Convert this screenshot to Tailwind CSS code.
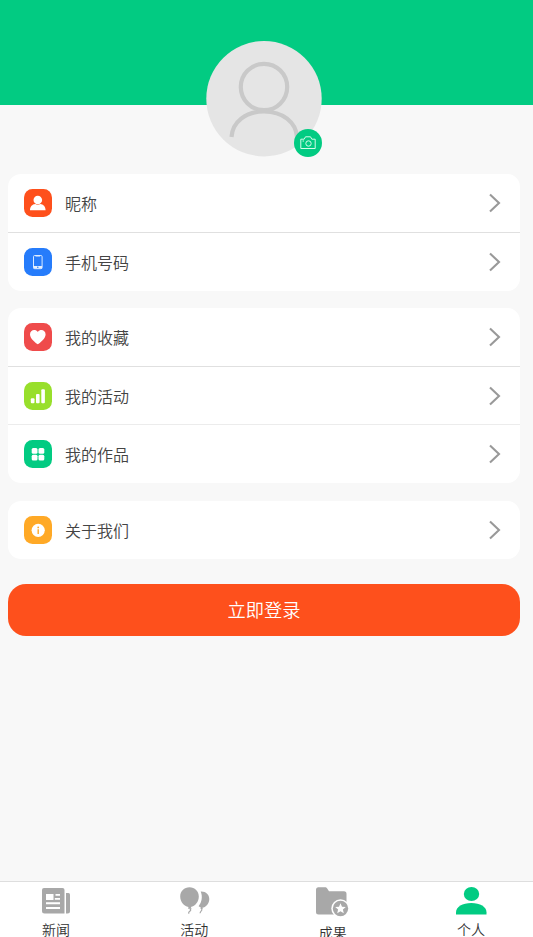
<!DOCTYPE html>
<html lang="zh-CN">

<head>
    <meta charset="UTF-8">
    <meta name="viewport" content="width=device-width, initial-scale=1.0">
    <title>个人</title>
    <script src="https://cdn.jsdelivr.net/npm/@tailwindcss/browser@4"></script>
</head>

<body class="bg-[#f8f8f8] h-screen flex flex-col overflow-hidden font-['Noto_Sans_CJK_SC',sans-serif] font-[350] text-[#444]">

    <!-- Header -->
    <header class="bg-[#02cb82] h-[105px] shrink-0 pt-[41px] pr-[5px] flex justify-center">
        <div class="relative w-[116px] h-[116px] shrink-0">
            <svg class="w-[116px] h-[116px]" viewBox="0 0 116 116" fill="none">
                <circle cx="58" cy="57.7" r="57.7" fill="#e5e5e5" />
                <circle cx="58" cy="46" r="23.2" stroke="#c9c9c9" stroke-width="4.2" />
                <path d="M25.5 96C26.500 81 39.5 70.500 58 70.500S90 81 91 96" stroke="#c9c9c9" stroke-width="4.2" />
            </svg>
            <button class="absolute left-[88px] top-[88px] w-7 h-7 rounded-full bg-[#02cb82] flex items-center justify-center">
                <svg class="w-4 h-4" viewBox="0 0 16 16" fill="none" stroke="#d5fbea" stroke-width="1">
                    <path d="M.8 4.200h3.400l1.300-2.400h5l1.300 2.400h3.400v9.300H.8z" stroke-linejoin="round" />
                    <circle cx="8.500" cy="8.500" r="2.700" />
                    <path d="M2.500 6h1.500" />
                </svg>
            </button>
        </div>
    </header>

    <main class="flex-1 min-h-0 pt-[69px] pl-2 pr-[13px]">
        <!-- Account -->
        <div class="bg-white rounded-[13px] h-[117px] divide-y divide-[#e0e0e0] flex flex-col">
            <a class="flex-1 flex items-center px-4">
                <svg class="w-7 h-7" viewBox="0 0 28 28">
                    <rect width="28" height="28" rx="8.500" fill="#fe501c" />
                    <circle cx="13.800" cy="11" r="4.300" fill="#fff" />
                    <path d="M6 21.300c0-3.700 2.300-5.800 5.200-6.200 1.600.9 3.500.9 5.100 0 3 .4 5.300 2.500 5.300 6.200z" fill="#fff" />
                </svg>
                <span class="ml-[13px] text-[16px] leading-6 flex-1">昵称</span>
                <svg class="w-3 h-5 mr-[3px]" viewBox="0 0 12 20" fill="none" stroke="#999" stroke-width="2.100"><path d="M1 1.500l9 8.500-9 8.500" /></svg>
            </a>
            <a class="flex-1 flex items-center px-4">
                <svg class="w-7 h-7" viewBox="0 0 28 28">
                    <rect width="28" height="28" rx="8.500" fill="#267cfb" />
                    <rect x="9.500" y="7.500" width="8.600" height="13.200" rx="1.200" fill="none" stroke="#d7e8ff" stroke-width="1" />
                    <path d="M9.500 18h8.600v2.500H9.500zM11.500 7.300h4.600v1.300h-4.600z" fill="#e5f0ff" />
                    <circle cx="13.800" cy="19.300" r=".8" fill="#267cfb" />
                </svg>
                <span class="ml-[13px] text-[16px] leading-6 flex-1">手机号码</span>
                <svg class="w-3 h-5 mr-[3px]" viewBox="0 0 12 20" fill="none" stroke="#999" stroke-width="2.100"><path d="M1 1.500l9 8.500-9 8.500" /></svg>
            </a>
        </div>

        <!-- My content -->
        <div class="mt-[17px] bg-white rounded-[13px] h-[175px] divide-y divide-[#e0e0e0] flex flex-col">
            <a class="flex-1 flex items-center px-4">
                <svg class="w-7 h-7" viewBox="0 0 28 28">
                    <rect width="28" height="28" rx="8.500" fill="#ef4b4b" />
                    <path d="M13.800 21.200C12 20.500 6 15.700 6 11.600c0-4.800 5.400-6 7.800-2.600 2.400-3.400 7.800-2.200 7.800 2.600 0 4.100-6 8.900-7.800 9.600z" fill="#fff" />
                </svg>
                <span class="ml-[13px] text-[16px] leading-6 flex-1">我的收藏</span>
                <svg class="w-3 h-5 mr-[3px]" viewBox="0 0 12 20" fill="none" stroke="#999" stroke-width="2.100"><path d="M1 1.500l9 8.500-9 8.500" /></svg>
            </a>
            <a class="flex-1 flex items-center px-4 border-[#ececec]">
                <svg class="w-7 h-7" viewBox="0 0 28 28">
                    <rect width="28" height="28" rx="8.500" fill="#98df2b" />
                    <g fill="#fff">
                        <rect x="6.800" y="16.300" width="3.700" height="5" rx="1" />
                        <rect x="12" y="12" width="3.600" height="9.300" rx="1" />
                        <rect x="17.300" y="7.200" width="3.600" height="14.100" rx="1" />
                    </g>
                </svg>
                <span class="ml-[13px] text-[16px] leading-6 flex-1">我的活动</span>
                <svg class="w-3 h-5 mr-[3px]" viewBox="0 0 12 20" fill="none" stroke="#999" stroke-width="2.100"><path d="M1 1.500l9 8.500-9 8.500" /></svg>
            </a>
            <a class="flex-1 flex items-center px-4">
                <svg class="w-7 h-7" viewBox="0 0 28 28">
                    <rect width="28" height="28" rx="8.500" fill="#02cb82" />
                    <g fill="#fff">
                        <rect x="7.700" y="8" width="5.800" height="5.800" rx="1.500" />
                        <rect x="14.500" y="8" width="5.800" height="5.800" rx="1.500" />
                        <rect x="7.700" y="14.800" width="5.800" height="5.800" rx="1.500" />
                        <rect x="14.500" y="14.800" width="5.800" height="5.800" rx="1.500" />
                    </g>
                </svg>
                <span class="ml-[13px] text-[16px] leading-6 flex-1">我的作品</span>
                <svg class="w-3 h-5 mr-[3px]" viewBox="0 0 12 20" fill="none" stroke="#999" stroke-width="2.100"><path d="M1 1.500l9 8.500-9 8.500" /></svg>
            </a>
        </div>

        <!-- About -->
        <div class="mt-[18px] bg-white rounded-[13px] h-[58px] flex flex-col">
            <a class="flex-1 flex items-center px-4">
                <svg class="w-7 h-7" viewBox="0 0 28 28">
                    <rect width="28" height="28" rx="8.500" fill="#ffa926" />
                    <circle cx="14.200" cy="14.300" r="6.600" fill="#fff" />
                    <circle cx="14.200" cy="11.400" r=".9" fill="#ffa926" />
                    <path d="M14.200 13.200v4.800" fill="none" stroke="#ffa926" stroke-width="1.400" />
                </svg>
                <span class="ml-[13px] text-[16px] leading-6 flex-1">关于我们</span>
                <svg class="w-3 h-5 mr-[3px]" viewBox="0 0 12 20" fill="none" stroke="#999" stroke-width="2.100"><path d="M1 1.500l9 8.500-9 8.500" /></svg>
            </a>
        </div>

        <button class="mt-[25px] w-full h-[52px] rounded-[18px] bg-[#fe501c] text-white text-[18.3px] leading-6 pb-0.5">立即登录</button>
    </main>

    <!-- Tab bar -->
    <nav class="h-14 shrink-0 bg-white border-t border-[#dedede] pl-7 pr-[34px] flex justify-between text-[14px] leading-4 text-[#333]">
        <a class="w-14 flex flex-col items-center pt-[5px]">
            <svg class="w-8 h-7 shrink-0" viewBox="0 0 32 28">
                <path d="M4 1h18.500a2 2 0 0 1 2 2v23.500H4.500a2.500 2.500 0 0 1-2.500-2.500V3a2 2 0 0 1 2-2z" fill="#a8a8a8" />
                <path d="M26 6h2.500a1.500 1.500 0 0 1 1.500 1.500V24a2.500 2.500 0 0 1-2.500 2.500H26z" fill="#a8a8a8" />
                <path d="M6 7h7.500v6H6zM15.500 7H20v1.800h-4.500zM14.800 11H20v1.800h-5.200zM6 15.300h14v1.900H6zM6 20h14v1.900H6z" fill="#fff" />
            </svg>
            <span class="mt-[6px] whitespace-nowrap">新闻</span>
        </a>
        <a class="w-14 flex flex-col items-center pt-[5px]">
            <svg class="w-8 h-7 shrink-0" viewBox="-1 0 32 28" fill="#a8a8a8">
                <path d="M21.500 4.500c5-.5 8.800 2.800 8.800 7.500 0 4.500-3.500 8.500-7 8.800l.6 1.200h-2.400l.3-1.500-2.200-1.300c3.300-4 4.200-9.700 2.100-14.700z" />
                <path d="M10.500.3c5.300 0 9.300 4 9.300 9.200 0 5.300-3.500 9.500-8 10.500l.9 1.800H9L9.500 20C5 19 1.200 15 1.200 9.500 1.200 4.300 5.200.3 10.500.3z" />
                <path d="M10.700 21.500c3.400 2.800-2.600 2.700-.6 5.200M22.500 21.500c1.900 2.500-2.200 2.600-1.200 4.800" fill="none" stroke="#a8a8a8" stroke-width="1.200" />
            </svg>
            <span class="mt-[6px] whitespace-nowrap">活动</span>
        </a>
        <a class="w-14 flex flex-col items-center pt-[5px]">
            <svg class="w-[34px] h-[31px] shrink-0" viewBox="0 0 34 31">
                <path d="M2 .2h7c1 0 1.600.4 2.200 1.200L13 4.300h15a2.500 2.500 0 0 1 2.500 2.500V27.500H2.500A2.500 2.500 0 0 1 0 25V2.500A2.300 2.300 0 0 1 2 .2z" fill="#a8a8a8" />
                <circle cx="24.500" cy="21.500" r="9.200" fill="#fff" />
                <circle cx="24.500" cy="21.500" r="7.700" fill="#a8a8a8" />
                <path d="M24.500 16.200l1.500 3.500 3.800.3-2.900 2.500.9 3.700-3.300-2-3.300 2 .9-3.700-2.900-2.500 3.800-.3z" fill="#fff" />
            </svg>
            <span class="mt-[6px] whitespace-nowrap">成果</span>
        </a>
        <a class="w-14 flex flex-col items-center pt-[5px]">
            <svg class="w-8 h-7 shrink-0" viewBox="0 0 32 28" fill="#02cb82">
                <ellipse cx="16.500" cy="7" rx="7.700" ry="6.900" />
                <path d="M1 27.500v-2.200C1 19.800 7.500 16 16.300 16s15.200 3.800 15.200 9.300v2.200z" />
            </svg>
            <span class="mt-[6px] whitespace-nowrap">个人</span>
        </a>
    </nav>
</body>

</html>
